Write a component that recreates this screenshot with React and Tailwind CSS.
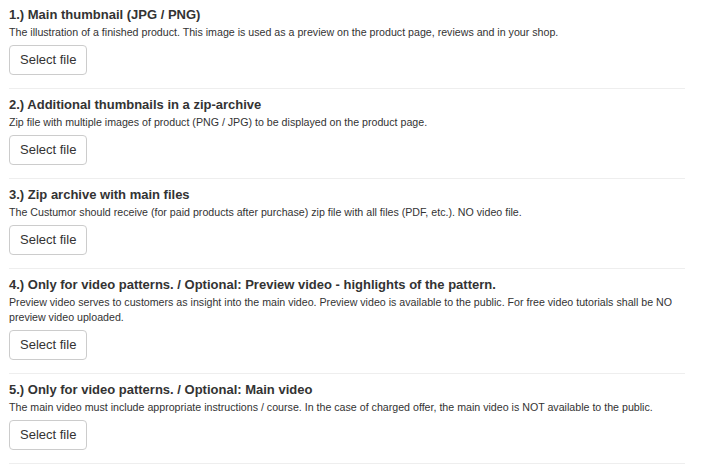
const sections = [
  {
    title: "1.) Main thumbnail (JPG / PNG)",
    text: "The illustration of a finished product. This image is used as a preview on the product page, reviews and in your shop.",
  },
  {
    title: "2.) Additional thumbnails in a zip-archive",
    text: "Zip file with multiple images of product (PNG / JPG) to be displayed on the product page.",
  },
  {
    title: "3.) Zip archive with main files",
    text: "The Custumor should receive (for paid products after purchase) zip file with all files (PDF, etc.). NO video file.",
  },
  {
    title: "4.) Only for video patterns. / Optional: Preview video - highlights of the pattern.",
    text: "Preview video serves to customers as insight into the main video. Preview video is available to the public. For free video tutorials shall be NO preview video uploaded.",
  },
  {
    title: "5.) Only for video patterns. / Optional: Main video",
    text: "The main video must include appropriate instructions / course. In the case of charged offer, the main video is NOT available to the public.",
  },
];

export default function App() {
  return (
    <div className="w-[703px] min-h-[468px] bg-white pl-[9px] pr-[18px] text-[#333] font-['Liberation_Sans',Arial,sans-serif]">
      {sections.map((s, i) => (
        <div
          key={i}
          className={`${i === 0 ? "pt-[7px]" : "pt-2"} pb-[13px] border-b border-[#eee]`}
        >
          <h4 className="text-[13px] leading-[16px] font-bold">{s.title}</h4>
          <p className="mt-[2px] text-[10.65px] leading-[15px]">{s.text}</p>
          <button className="mt-[5px] h-[30px] px-[10px] border border-[#ccc] rounded-[4px] bg-white text-[13px] leading-[20px] text-[#333]">
            Select file
          </button>
        </div>
      ))}
    </div>
  );
}
